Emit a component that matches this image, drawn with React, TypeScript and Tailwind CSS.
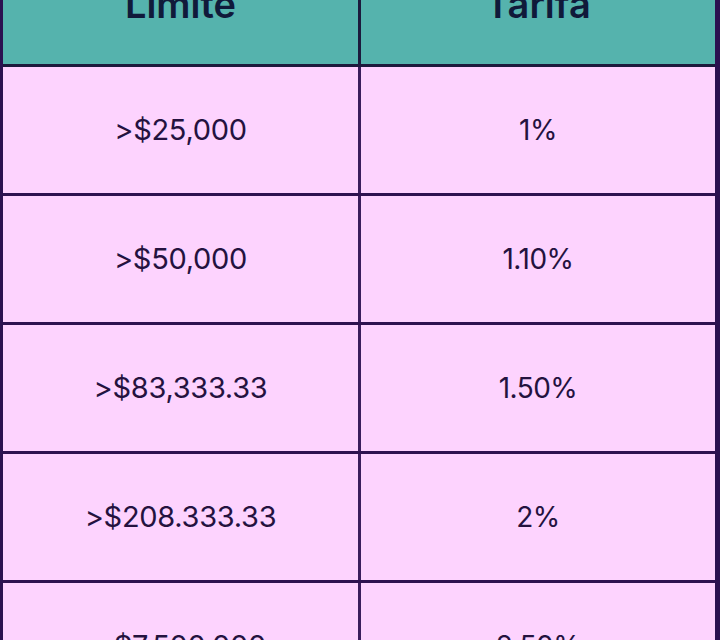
import React from "react";

const rows: [string, string][] = [
  [">$25,000", "1%"],
  [">$50,000", "1.10%"],
  [">$83,333.33", "1.50%"],
  [">$208.333.33", "2%"],
  [">$7,500,000", "2.50%"],
];

export default function App() {
  return (
    <div
      className="w-[720px] h-[640px] overflow-hidden bg-[#fdd3fe]"
      style={{ fontFamily: "Inter, 'Noto Sans', sans-serif" }}
    >
      <div className="-mt-[55px] border-l-[3px] border-r-[5px] border-[#2b1150]">
        <div className="grid grid-cols-[355px_3px_1fr] h-[122px] bg-[#55b3ad] border-b-[3px] border-[#1c1a3c]">
          <div className="flex items-center justify-center text-[38px] font-semibold text-[#101a3a]">
            Límite
          </div>
          <div className="bg-[#1c1a3c]" />
          <div className="flex items-center justify-center text-[38px] font-semibold text-[#101a3a]">
            Tarifa
          </div>
        </div>
        {rows.map(([a, b], i) => (
          <div
            key={i}
            className="grid grid-cols-[355px_3px_1fr] h-[129px] border-b-[3px] border-[#2e1250]"
          >
            <div className="flex items-center justify-center text-[29px] tracking-[-0.3px] text-[#24123f]">
              {a}
            </div>
            <div className="bg-[#3a1d5c]" />
            <div className="flex items-center justify-center text-[28px] tracking-[-0.5px] text-[#24123f]">
              {b}
            </div>
          </div>
        ))}
      </div>
    </div>
  );
}
